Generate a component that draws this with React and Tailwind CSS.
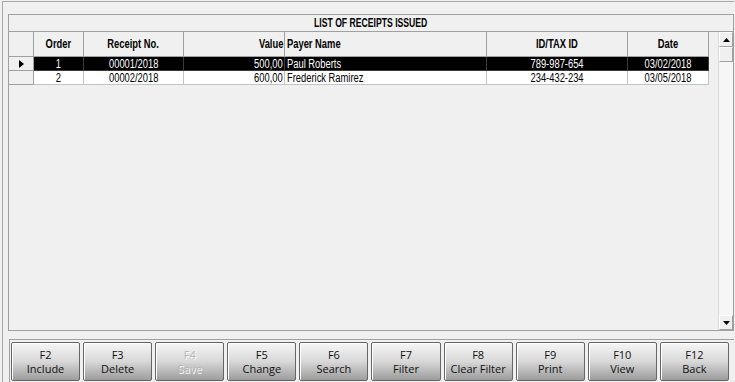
const arialNarrow = { fontFamily: '"Liberation Sans Narrow", "Arial Narrow", "Liberation Sans", sans-serif' };

const columns = [
    { key: "order", label: "Order", width: "w-[50px]", align: "justify-center", origin: "origin-center" },
    { key: "receipt", label: "Receipt No.", width: "w-[100px]", align: "justify-center", origin: "origin-center" },
    { key: "value", label: "Value", width: "w-[101px]", align: "justify-end pr-[1px]", origin: "origin-right" },
    { key: "payer", label: "Payer Name", width: "w-[202px]", align: "justify-start pl-[2px]", origin: "origin-left" },
    { key: "taxId", label: "ID/TAX ID", width: "w-[141px]", align: "justify-center", origin: "origin-center" },
    { key: "date", label: "Date", width: "w-[81px]", align: "justify-center", origin: "origin-center" },
];

const receipts = [
    { order: "1", receipt: "00001/2018", value: "500,00", payer: "Paul Roberts", taxId: "789-987-654", date: "03/02/2018" },
    { order: "2", receipt: "00002/2018", value: "600,00", payer: "Frederick Ramirez", taxId: "234-432-234", date: "03/05/2018" },
];

const buttons = [
    { key: "F2", label: "Include" },
    { key: "F3", label: "Delete" },
    { key: "F4", label: "Save", disabled: true },
    { key: "F5", label: "Change" },
    { key: "F6", label: "Search" },
    { key: "F7", label: "Filter" },
    { key: "F8", label: "Clear Filter" },
    { key: "F9", label: "Print" },
    { key: "F10", label: "View" },
    { key: "F12", label: "Back" },
];

// no narrow font installed, so squeeze Liberation Sans to Arial Narrow's width
const Narrow = ({ origin = "origin-center", children }) => (
    <span className={`inline-block whitespace-nowrap scale-x-[0.78] ${origin}`}>{children}</span>
);

const Arrow = ({ up }) => (
    <svg width="7" height="4" viewBox="0 0 7 4">
        <path d={up ? "M0 4 L3.5 0 L7 4 Z" : "M0 0 L3.5 4 L7 0 Z"} fill="#000" />
    </svg>
);

const ScrollBar = () => (
    <div className="w-[15px] flex flex-col bg-[#f4f4f4] border-l border-[#d8d8d8]">
        <div className="h-[15px] flex items-center justify-center bg-[#f0f0f0] border border-t-white border-l-white border-r-[#a0a0a0] border-b-[#a0a0a0]">
            <Arrow up />
        </div>
        <div className="h-[15px] bg-[#f0f0f0] border border-t-white border-l-white border-r-[#a0a0a0] border-b-[#a0a0a0]" />
        <div className="flex-1 bg-[#f6f6f6]" />
        <div className="h-[15px] flex items-center justify-center bg-[#f0f0f0] border border-t-white border-l-white border-r-[#a0a0a0] border-b-[#a0a0a0]">
            <Arrow />
        </div>
    </div>
);

const ReceiptGrid = () => (
    <div className="flex flex-col flex-1">
        <div className="flex h-[25px]">
            <div className="w-[25px] border-r border-b border-[#a0a0a0] bg-[#f0f0f0]" />
            {columns.map((col) => (
                <div
                    key={col.key}
                    className={`${col.width} ${col.align} flex items-center border-r border-b border-[#a0a0a0] bg-[#f0f0f0] text-[12px] font-bold text-black`}
                >
                    <Narrow origin={col.origin}>{col.label}</Narrow>
                </div>
            ))}
        </div>
        {receipts.map((row, i) => {
            const selected = i === 0;
            return (
                <div key={row.order} className="flex h-[14px]">
                    <div className="w-[25px] flex items-center justify-center border-r border-b border-[#a0a0a0] bg-[#f0f0f0]">
                        {selected && (
                            <svg width="5" height="8" viewBox="0 0 5 8" className="ml-px">
                                <path d="M0 0 L5 4 L0 8 Z" fill="#000" />
                            </svg>
                        )}
                    </div>
                    {columns.map((col) => (
                        <div
                            key={col.key}
                            className={
                                selected
                                    ? `${col.width} ${col.align} flex items-center border-r border-b border-[#3c3c3c] bg-black text-white text-[12px] leading-none`
                                    : `${col.width} ${col.align} flex items-center border-r border-b border-[#c4c4c4] bg-white text-black text-[12px] leading-none`
                            }
                        >
                            <Narrow origin={col.origin}>{row[col.key]}</Narrow>
                        </div>
                    ))}
                </div>
            );
        })}
    </div>
);

const FunctionButton = ({ keyName, label, disabled }) => (
    <button
        type="button"
        disabled={disabled}
        className={`flex-1 h-[39px] flex flex-col items-center justify-center rounded-[2px] border border-[#666666] bg-linear-to-b from-[#f6f6f6] via-[#d8d8d8] to-[#9c9c9c] shadow-[inset_1px_1px_0_#ffffff] text-[11px] leading-[14px] ${
            disabled ? "text-[#b4b4b4] [text-shadow:1px_1px_0_#ffffff]" : "text-[#111111]"
        }`}
        style={{ fontFamily: '"Open Sans", "Noto Sans", sans-serif' }}
    >
        <span>{keyName}</span>
        <span>{label}</span>
    </button>
);

export default function App() {
    return (
        <div className="w-[735px] h-[382px] overflow-hidden bg-[#f0f0f0] pt-px pl-[2px] pr-[1px]" style={arialNarrow}>
            <div className="h-full flex flex-col border-t border-l border-[#a8a8a8]">
                <div className="mt-[12px] ml-[5px] h-[317px] flex flex-col border border-[#a0a0a0]">
                    <div className="h-[17px] flex items-center justify-center border-b border-[#a0a0a0] text-[12px] font-bold text-black">
                        <span className="inline-block whitespace-nowrap scale-x-[0.72] origin-center">LIST OF RECEIPTS ISSUED</span>
                    </div>
                    <div className="flex flex-1">
                        <ReceiptGrid />
                        <ScrollBar />
                    </div>
                </div>
                <div className="mt-[8px] ml-[6px] flex-1 flex gap-[3px] border-t border-l border-[#a0a0a0] pt-[2px] pl-[1px] pr-[5px]">
                    {buttons.map((b) => (
                        <FunctionButton key={b.key} keyName={b.key} label={b.label} disabled={b.disabled} />
                    ))}
                </div>
            </div>
        </div>
    );
}
